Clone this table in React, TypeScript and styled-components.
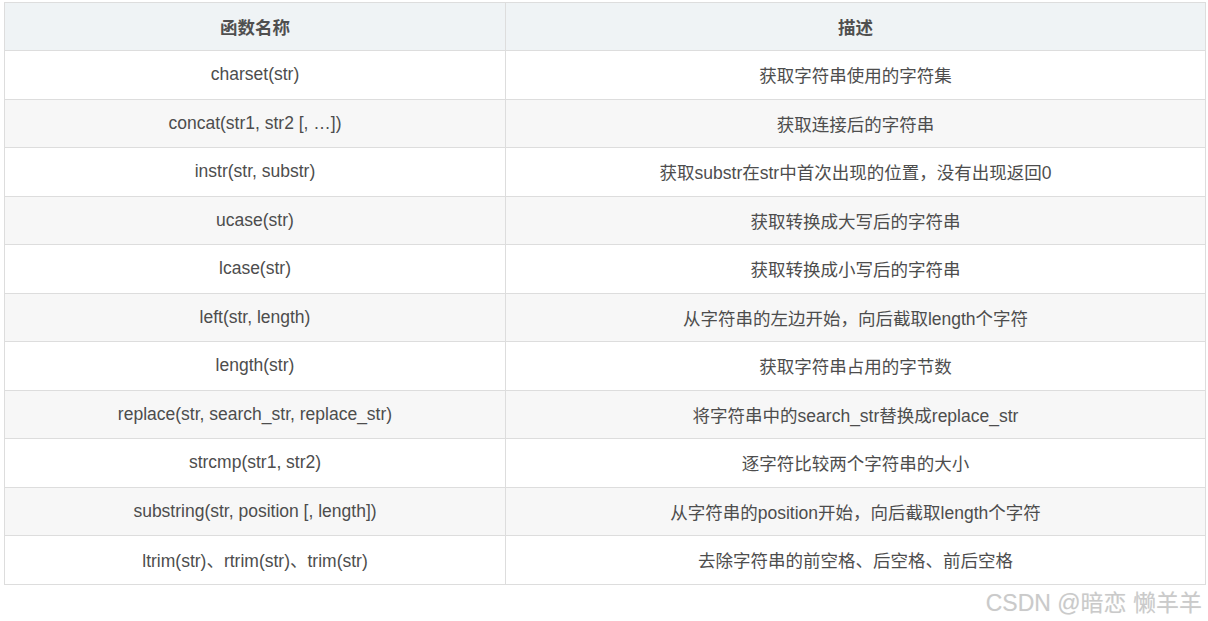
import React from 'react';
import styled, { createGlobalStyle } from 'styled-components';

const GlobalStyle = createGlobalStyle`
  html, body {
    margin: 0;
    padding: 0;
    background: #ffffff;
  }
  body {
    font-family: 'Liberation Sans', 'Noto Sans CJK SC', sans-serif;
  }
`;

const Page = styled.div`
  width: 1208px;
  padding: 2px 3px 0 4px;
  box-sizing: border-box;
`;

const Table = styled.table`
  width: 1201px;
  border-collapse: collapse;
  table-layout: fixed;
  color: #4d4d4d;
  font-size: 17.5px;
`;

const HeadCell = styled.th<{ $width: number }>`
  width: ${({ $width }) => $width}px;
  height: 48px;
  padding: 0 8px;
  box-sizing: border-box;
  background: #eff3f5;
  border: 1px solid #dddddd;
  font-weight: bold;
  text-align: center;
  color: #4f4f4f;
`;

const Row = styled.tr<{ $striped: boolean }>`
  background: ${({ $striped }) => ($striped ? '#f7f7f7' : '#ffffff')};
`;

const Cell = styled.td`
  height: 48.5px;
  padding: 0 8px;
  box-sizing: border-box;
  border: 1px solid #dddddd;
  text-align: center;
  white-space: nowrap;
`;

const Watermark = styled.div`
  text-align: right;
  padding-right: 3px;
  margin-top: 3px;
  font-size: 23px;
  line-height: 30px;
  color: #cacaca;
  text-shadow: 0 0 1px rgba(0, 0, 0, 0.08);
`;

const rows: [string, string][] = [
  ['charset(str)', '获取字符串使用的字符集'],
  ['concat(str1, str2 [, …])', '获取连接后的字符串'],
  ['instr(str, substr)', '获取substr在str中首次出现的位置，没有出现返回0'],
  ['ucase(str)', '获取转换成大写后的字符串'],
  ['lcase(str)', '获取转换成小写后的字符串'],
  ['left(str, length)', '从字符串的左边开始，向后截取length个字符'],
  ['length(str)', '获取字符串占用的字节数'],
  ['replace(str, search_str, replace_str)', '将字符串中的search_str替换成replace_str'],
  ['strcmp(str1, str2)', '逐字符比较两个字符串的大小'],
  ['substring(str, position [, length])', '从字符串的position开始，向后截取length个字符'],
  ['ltrim(str)、rtrim(str)、trim(str)', '去除字符串的前空格、后空格、前后空格'],
];

export default function App() {
  return (
    <Page>
      <GlobalStyle />
      <Table>
        <thead>
          <tr>
            <HeadCell $width={501}>函数名称</HeadCell>
            <HeadCell $width={700}>描述</HeadCell>
          </tr>
        </thead>
        <tbody>
          {rows.map(([fn, desc], i) => (
            <Row key={fn} $striped={i % 2 === 1}>
              <Cell>{fn}</Cell>
              <Cell>{desc}</Cell>
            </Row>
          ))}
        </tbody>
      </Table>
      <Watermark>CSDN @暗恋 懒羊羊</Watermark>
    </Page>
  );
}
